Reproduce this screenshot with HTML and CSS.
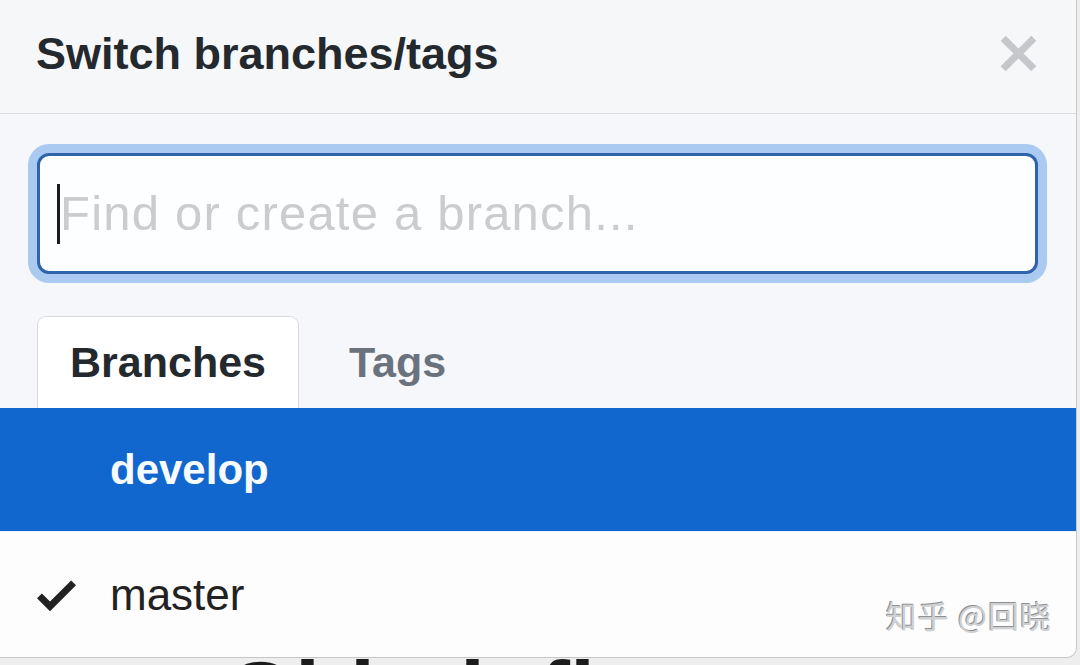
FILE: index.html
```html
<!DOCTYPE html>
<html lang="en">
<head>
    <meta charset="UTF-8">
    <meta name="viewport" content="width=device-width, initial-scale=1.0">
    <title>Switch branches/tags</title>
    <link rel="stylesheet" href="styles.css">
</head>
<body>
    <div class="page">
        <div class="select-menu">
            <div class="select-menu-header">
                <span class="select-menu-title">Switch branches/tags</span>
                <button class="select-menu-close" aria-label="Close">
                    <svg viewBox="0 0 12 16" width="41" height="55"><path d="M7.48 8l3.75 3.75-1.48 1.48L6 9.48l-3.75 3.75-1.48-1.48L4.52 8 .77 4.25l1.48-1.48L6 6.52l3.75-3.75 1.48 1.48L7.48 8z"/></svg>
                </button>
            </div>

            <div class="select-menu-filters">
                <div class="filter-input">
                    <span class="caret"></span>
                    <span class="placeholder">Find or create a branch...</span>
                </div>
                <div class="select-menu-tabs">
                    <a class="select-menu-tab selected">Branches</a>
                    <a class="select-menu-tab">Tags</a>
                </div>
            </div>

            <div class="select-menu-list">
                <div class="select-menu-item focused">
                    <span class="check"></span>
                    <span class="item-text">develop</span>
                </div>
                <div class="select-menu-item">
                    <span class="check">
                        <svg viewBox="0 0 12 16" width="39" height="52"><path d="M12 5l-8 8-4-4 1.5-1.5L4 10l6.5-6.5L12 5z"/></svg>
                    </span>
                    <span class="item-text">master</span>
                </div>
                <span class="watermark">知乎 @回晓</span>
            </div>
        </div>

        <div class="page-heading">Github flow</div>
    </div>
</body>
</html>
```

FILE: styles.css
```css
html, body {
    margin: 0;
    height: 665px;
    overflow: hidden;
}
body {
    font-family: 'Liberation Sans', Arial, sans-serif;
    background: #eeeeef;
    color: #24292e;
}
.page {
    width: 1080px;
    height: 665px;
    overflow: hidden;
}
.select-menu {
    position: relative;
    z-index: 1;
    width: 1076px;
    background: #fdfdfe;
    border-right: 1px solid #c9cacc;
    border-bottom: 1px solid #c4c5c7;
    border-radius: 0 0 10px 0;
    overflow: hidden;
}
.select-menu-header {
    display: flex;
    justify-content: space-between;
    align-items: center;
    height: 107px;
    padding: 0 37px 6px 36px;
    background: #f6f7f9;
    border-bottom: 1px solid #dcdde0;
}
.select-menu-title {
    font-size: 45px;
    font-weight: bold;
    line-height: 1;
    color: #24292e;
}
.select-menu-close {
    display: flex;
    padding: 0;
    border: none;
    background: none;
    fill: #c6c7ca;
    cursor: pointer;
}
.select-menu-filters {
    padding: 39px 38px 0 37px;
    background: #f5f7fa;
}
.filter-input {
    display: flex;
    align-items: center;
    height: 115px;
    padding: 0 20px 0 17px;
    background: #fdfeff;
    border: 3px solid #2f63aa;
    border-radius: 12px;
    box-shadow: 0 0 0 9px #abcaf1;
}
.caret {
    width: 3px;
    height: 60px;
    background: #1b1b1b;
}
.placeholder {
    font-size: 49px;
    letter-spacing: 1.2px;
    color: #cbcccd;
    line-height: 1;
}
.select-menu-tabs {
    display: flex;
    gap: 17px;
    margin-top: 42px;
}
.select-menu-tab {
    display: flex;
    align-items: center;
    height: 91px;
    padding: 0 32px;
    font-size: 43px;
    font-weight: bold;
    line-height: 1;
    color: #6a737d;
    border: 1px solid transparent;
    border-bottom: none;
    border-radius: 9px 9px 0 0;
}
.select-menu-tab.selected {
    background: #fff;
    color: #24292e;
    border-color: #d8dadd;
}
.select-menu-list {
    position: relative;
}
.select-menu-item {
    display: flex;
    align-items: center;
    height: 125px;
    padding: 0 37px;
}
.select-menu-item.focused {
    height: 123px;
    background: #1267cf;
    color: #f7fbff;
    font-weight: bold;
    font-size: 42px;
}
.select-menu-item + .select-menu-item {
    font-size: 44px;
    color: #222;
    border-top: 1px solid #e8f0fa;
}
.check {
    display: flex;
    width: 39px;
    margin-right: 34px;
    fill: #222;
}
.item-text {
    line-height: 1;
}
.watermark {
    position: absolute;
    right: 24px;
    bottom: 20px;
    font-family: 'Noto Sans CJK SC', sans-serif;
    font-size: 31px;
    color: #cfd0d2;
    text-shadow: -1px -1px 0 #8f9092, 1px 1px 0 #fff;
    letter-spacing: 1px;
}
.page-heading {
    margin: 0 0 0 225px;
    padding-top: 3px;
    font-size: 90px;
    line-height: 0.75;
    font-weight: bold;
    color: #1c1c1c;
}
```
